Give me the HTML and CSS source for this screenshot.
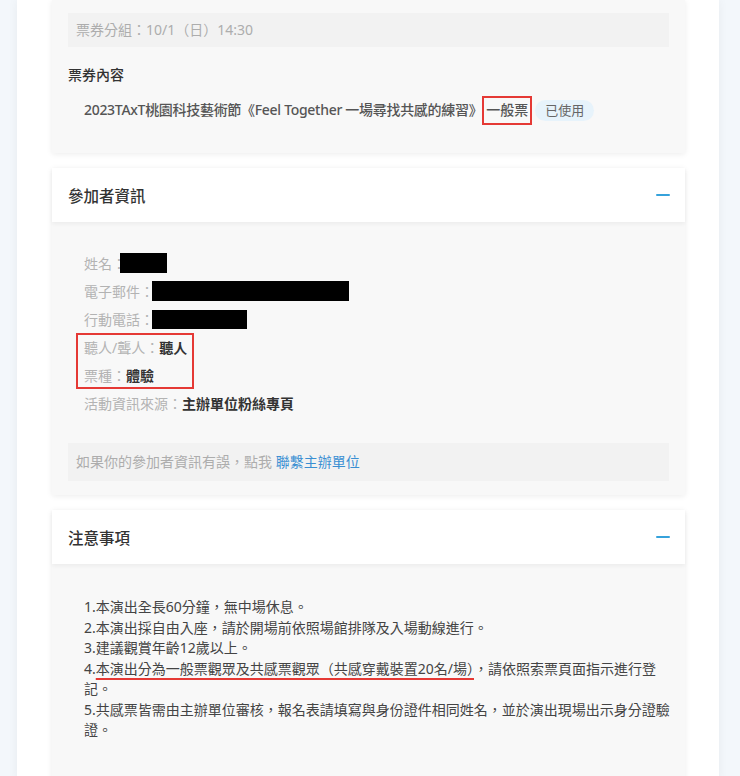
FILE: index.html
```html
<!DOCTYPE html>
<html lang="zh-Hant">
<head>
    <meta charset="UTF-8">
    <meta name="viewport" content="width=device-width, initial-scale=1.0">
    <title>票券詳情</title>
    <link rel="stylesheet" href="styles.css">
</head>
<body>
    <div class="page">
        <!-- 票券資訊 -->
        <div class="card card-first">
            <div class="card-body ticket-body">
                <div class="note-box muted">票券分組：10/1（日）14:30</div>
                <div class="section-title">票券內容</div>
                <div class="ticket-row">
                    <span class="ticket-name">2023TAxT桃園科技藝術節《Feel Together 一場尋找共感的練習》<span class="mark-box">一般票</span></span>
                    <span class="badge">已使用</span>
                </div>
            </div>
        </div>

        <!-- 參加者資訊 -->
        <div class="card">
            <div class="card-head">
                <span class="card-title">參加者資訊</span>
                <span class="collapse"></span>
            </div>
            <div class="card-body attendee-body">
                <div class="info-list">
                    <div class="info-row"><span class="label">姓名：</span><span class="redact redact-name"></span></div>
                    <div class="info-row"><span class="label">電子郵件：</span><span class="redact redact-mail"></span></div>
                    <div class="info-row"><span class="label">行動電話：</span><span class="redact redact-phone"></span></div>
                    <div class="mark-group">
                        <div class="info-row"><span class="label">聽人/聾人：</span><span class="value">聽人</span></div>
                        <div class="info-row"><span class="label">票種：</span><span class="value">體驗</span></div>
                    </div>
                    <div class="info-row"><span class="label">活動資訊來源：</span><span class="value">主辦單位粉絲專頁</span></div>
                </div>
                <div class="note-box muted info-note">如果你的參加者資訊有誤，點我 <a class="link" href="#">聯繫主辦單位</a></div>
            </div>
        </div>

        <!-- 注意事項 -->
        <div class="card">
            <div class="card-head">
                <span class="card-title">注意事項</span>
                <span class="collapse"></span>
            </div>
            <div class="card-body notice-body">
                <p>1.本演出全長60分鐘，無中場休息。</p>
                <p>2.本演出採自由入座，請於開場前依照場館排隊及入場動線進行。</p>
                <p>3.建議觀賞年齡12歲以上。</p>
                <p>4.<span class="mark-line">本演出分為一般票觀眾及共感票觀眾（共感穿戴裝置20名/場）</span>，請依照索票頁面指示進行登記。</p>
                <p>5.共感票皆需由主辦單位審核，報名表請填寫與身份證件相同姓名，並於演出現場出示身分證驗證。</p>
            </div>
        </div>
    </div>
</body>
</html>
```

FILE: styles.css
```css
/*Общий фон*/
body {
    margin: 0;
    background-color: #f3f7fb;
    font-family: "Noto Sans", "Noto Sans CJK TC", sans-serif;
    font-size: 14px;
    color: #333;
}

/*Белая колонка*/
.page {
    width: 702px;
    margin-left: 17px;
    padding: 0 34px 0 35px;
    box-sizing: border-box;
    min-height: 776px;
    background-color: #fff;
    box-shadow: 0 0 10px rgba(0, 0, 0, 0.05);
}

/*Карточка*/
.card {
    margin-bottom: 15px;
    background-color: #f8f8f8;
    box-shadow: 0 1px 6px rgba(0, 0, 0, 0.08);
}

.card-head {
    height: 54px;
    padding: 0 15px 0 16px;
    display: flex;
    align-items: center;
    justify-content: space-between;
    background-color: #fff;
    box-shadow: 0 2px 4px rgba(0, 0, 0, 0.05);
    position: relative;
}

.card-title {
    font-size: 15.5px;
    font-weight: 500;
    color: #333;
}

/*Значок свернуть*/
.collapse {
    width: 14px;
    height: 2.5px;
    background-color: #36a2db;
    border-radius: 1px;
}

.card-body {
    padding: 0 16px;
}

.note-box {
    padding: 7px 8px;
    line-height: 20px;
    background-color: #f2f2f2;
}

.info-note {
    padding: 9px 8px;
}

.muted {
    color: #adadad;
}

.link {
    color: #3a8fd2;
    text-decoration: none;
}

/*Первая карточка*/
.ticket-body {
    padding-top: 13px;
    padding-bottom: 28px;
}

.section-title {
    margin-top: 18px;
    line-height: 20px;
    font-weight: 500;
}

.ticket-row {
    margin-top: 11px;
    padding-left: 16px;
    display: flex;
    align-items: center;
    gap: 3px;
}

.ticket-name {
    font-weight: 500;
    color: #555;
    line-height: 20px;
    letter-spacing: -0.3px;
}

.mark-box {
    display: inline-block;
    padding: 2px 2px 3px 2px;
    border: 2px solid #e53935;
    letter-spacing: 0;
}

.badge {
    height: 21px;
    padding: 0 10px;
    border-radius: 11px;
    background-color: #e7f3fb;
    color: #666;
    font-size: 13px;
    line-height: 21px;
}

/*Участник*/
.attendee-body {
    padding-top: 27px;
    padding-bottom: 14px;
}

.info-list {
    padding-left: 16px;
    margin-bottom: 26px;
}

.info-row {
    height: 28px;
    display: flex;
    align-items: center;
}

.label {
    color: #b3b3b3;
}

.value {
    font-weight: 600;
    color: #333;
}

.redact {
    height: 20px;
    background-color: #000;
}
.redact-name {width: 47px; margin-left: -6px;}
.redact-mail {width: 197px; margin-left: -2px;}
.redact-phone {width: 95px; margin-left: -2px; height: 19px;}

.mark-group {
    width: fit-content;
    margin-left: -8px;
    padding: 0 7px 0 8px;
    outline: 2px solid #e53935;
    outline-offset: -2px;
}

/*Заметки*/
.notice-body {
    padding: 33px 12px 40px 32px;
    color: #444;
    line-height: 20.5px;
}

.notice-body p {
    margin: 0;
}

.mark-line {
    text-decoration: underline;
    text-decoration-color: #e53935;
    text-decoration-thickness: 2px;
    text-underline-offset: 4px;
}
```
